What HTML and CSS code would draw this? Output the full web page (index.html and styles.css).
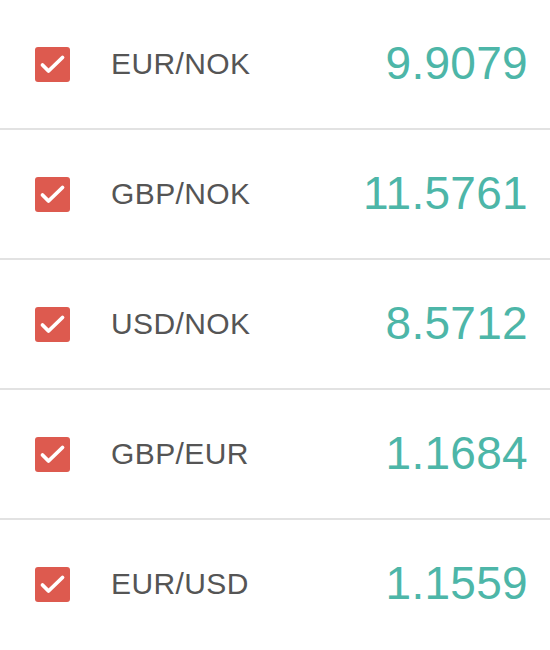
FILE: index.html
```html
<!DOCTYPE html>
<html>
<head>
<meta charset="utf-8">
<link rel="stylesheet" href="styles.css">
</head>
<body>
<ul class="list">
  <li class="row">
    <span class="check"><svg viewBox="0 0 35 35" width="35" height="35"><path d="M7.5 18 L13.5 24 L27.5 10.5" fill="none" stroke="#fff" stroke-width="3.8" stroke-linecap="round" stroke-linejoin="round"/></svg></span>
    <span class="pair">EUR/NOK</span>
    <span class="rate">9.9079</span>
  </li>
  <li class="row">
    <span class="check"><svg viewBox="0 0 35 35" width="35" height="35"><path d="M7.5 18 L13.5 24 L27.5 10.5" fill="none" stroke="#fff" stroke-width="3.8" stroke-linecap="round" stroke-linejoin="round"/></svg></span>
    <span class="pair">GBP/NOK</span>
    <span class="rate">11.5761</span>
  </li>
  <li class="row">
    <span class="check"><svg viewBox="0 0 35 35" width="35" height="35"><path d="M7.5 18 L13.5 24 L27.5 10.5" fill="none" stroke="#fff" stroke-width="3.8" stroke-linecap="round" stroke-linejoin="round"/></svg></span>
    <span class="pair">USD/NOK</span>
    <span class="rate">8.5712</span>
  </li>
  <li class="row">
    <span class="check"><svg viewBox="0 0 35 35" width="35" height="35"><path d="M7.5 18 L13.5 24 L27.5 10.5" fill="none" stroke="#fff" stroke-width="3.8" stroke-linecap="round" stroke-linejoin="round"/></svg></span>
    <span class="pair">GBP/EUR</span>
    <span class="rate">1.1684</span>
  </li>
  <li class="row">
    <span class="check"><svg viewBox="0 0 35 35" width="35" height="35"><path d="M7.5 18 L13.5 24 L27.5 10.5" fill="none" stroke="#fff" stroke-width="3.8" stroke-linecap="round" stroke-linejoin="round"/></svg></span>
    <span class="pair">EUR/USD</span>
    <span class="rate">1.1559</span>
  </li>
</ul>
</body>
</html>
```
FILE: styles.css
```css
html, body {
  margin: 0;
  padding: 0;
  background: #fff;
}
body {
  font-family: "Liberation Sans", Arial, sans-serif;
}
.list {
  list-style: none;
  margin: 0;
  padding: 0;
}
.row {
  display: flex;
  align-items: center;
  height: 128px;
  padding: 0 22px 0 35px;
  border-bottom: 2px solid #e2e2e2;
}
.row:last-child {
  border-bottom: none;
}
.check {
  width: 35px;
  height: 35px;
  border-radius: 3px;
  background: #dd5a4f;
  display: flex;
  flex-shrink: 0;
}
.pair {
  margin-left: 41px;
  font-size: 30px;
  letter-spacing: 0.4px;
  color: #555555;
  flex: 1;
}
.rate {
  font-size: 46px;
  letter-spacing: 0.3px;
  color: #4db6a8;
  margin-top: -3px;
}
```
